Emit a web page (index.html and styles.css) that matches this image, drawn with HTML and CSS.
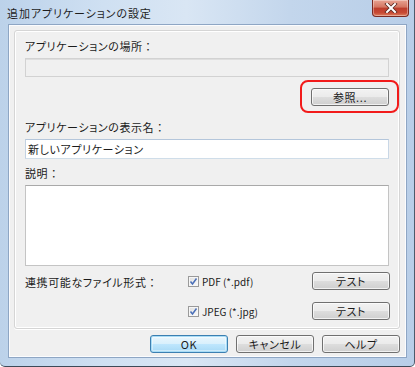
FILE: index.html
```html
<!DOCTYPE html>
<html lang="ja">
<head>
<meta charset="utf-8">
<link rel="stylesheet" href="styles.css">
</head>
<body>
<div class="window">
  <div class="titlebar">
    <span class="title">追加アプリケーションの設定</span>
    <div class="close">
      <svg width="14" height="10" viewBox="0 0 14 10"><path d="M3 1 L11 9 M11 1 L3 9" stroke="#5a2a22" stroke-width="3.6" stroke-linecap="square"/><path d="M3 1 L11 9 M11 1 L3 9" stroke="#fff" stroke-width="2" stroke-linecap="square"/></svg>
    </div>
  </div>
  <div class="client">
    <div class="group">
      <div class="label l1">アプリケーションの場所<span class="colon">：</span></div>
      <div class="field disabled"></div>
      <div class="browse-row">
        <div class="mark"><div class="btn">参照...</div></div>
      </div>
      <div class="label l2">アプリケーションの表示名<span class="colon">：</span></div>
      <div class="field active">新しいアプリケーション</div>
      <div class="label l3">説明<span class="colon">：</span></div>
      <div class="field area"></div>
      <div class="formats">
        <div class="label">連携可能なファイル形式<span class="colon">：</span></div>
        <div class="opts">
          <div class="opt">
            <label class="check"><span class="box"><svg width="9" height="9" viewBox="0 0 9 9"><path d="M1.5 4.5 L3.5 7 L7.5 1.5" fill="none" stroke="#4a6fb8" stroke-width="1.5"/></svg></span>PDF (*.pdf)</label>
            <div class="btn">テスト</div>
          </div>
          <div class="opt">
            <label class="check"><span class="box"><svg width="9" height="9" viewBox="0 0 9 9"><path d="M1.5 4.5 L3.5 7 L7.5 1.5" fill="none" stroke="#4a6fb8" stroke-width="1.5"/></svg></span>JPEG (*.jpg)</label>
            <div class="btn">テスト</div>
          </div>
        </div>
      </div>
    </div>
    <div class="actions">
      <div class="btn default">OK</div>
      <div class="btn">キャンセル</div>
      <div class="btn">ヘルプ</div>
    </div>
  </div>
</div>
</body>
</html>
```

FILE: styles.css
```css
* { box-sizing: border-box; }
html, body { margin: 0; padding: 0; }
body {
  width: 415px;
  height: 367px;
  overflow: hidden;
  font-family: "Noto Sans CJK JP", "Noto Sans", sans-serif;
  font-size: 11px;
  font-feature-settings: "palt";
  letter-spacing: 0.6px;
  color: #1b1b1b;
  background: #fff;
}
.colon { font-feature-settings: normal; letter-spacing: 0; }
.window {
  width: 415px;
  height: 367px;
  display: flex;
  flex-direction: column;
  padding: 0 7px 8px 7px;
  background: linear-gradient(90deg, #bcd2ea 0%, #cfe0f2 25%, #d9e6f4 45%, #c3d6ec 70%, #b8cee8 100%);
  border-right: 1px solid #4c5a6b;
  border-bottom: 1px solid #3d4a58;
  border-radius: 0 0 5px 5px;
}
.titlebar {
  height: 24px;
  display: flex;
  align-items: flex-start;
  justify-content: space-between;
  flex: none;
}
.title {
  margin-top: 5px;
  font-size: 11px;
  color: #1e1e1e;
  letter-spacing: 0.9px;
}
.close {
  width: 37px;
  height: 17px;
  margin-right: -2px;
  display: flex;
  align-items: center;
  justify-content: center;
  background: linear-gradient(#e8a493 0%, #d47561 45%, #bd3d2c 50%, #c74a34 80%, #dd7f5e 100%);
  border: 1px solid #7a2a22;
  border-top: none;
  border-radius: 0 0 4px 4px;
  box-shadow: inset 0 0 0 1px rgba(255,255,255,0.35);
}
.close svg { display: block; }
.client {
  flex: 1;
  margin-left: 1px;
  background: #f0f0f0;
  border: 1px solid #8ea6c4;
  box-shadow: inset 0 0 0 1px #fbfcfe;
  padding: 5px 6px 0 5px;
  display: flex;
  flex-direction: column;
}
.group {
  height: 299px;
  border: 1px solid #d5d5d5;
  border-radius: 3px;
  box-shadow: inset 0 0 0 1px #ffffff, 0 1px 0 #ffffff;
  padding: 7px 10px 0 10px;
  display: flex;
  flex-direction: column;
}
.label {
  line-height: 16px;
  height: 16px;
}
.field {
  margin-top: 4px;
  height: 19px;
  border: 1px solid #d9d9d9;
  background: #f0f0f0;
}
.field.disabled {
  border-color: #d2d2d2;
  box-shadow: inset 0 1px 0 #dedede;
}
.field.active {
  height: 20px;
  background: #fff;
  border: 1px solid #abadb3;
  border-color: #b4c6db #c9d7e6 #cfdde9 #c3d2e2;
  padding-left: 2px;
  line-height: 18px;
}
.field.area {
  height: 81px;
  background: #fff;
  border: 1px solid #c4c4c4;
  border-top-color: #a9a9a9;
}
.browse-row {
  display: flex;
  justify-content: flex-end;
  margin-top: 3px;
  margin-right: -10px;
}
.mark {
  border: 2px solid #f21b1b;
  border-radius: 8px;
  padding: 6px 8px 5px 9px;
}
.btn {
  width: 78px;
  height: 18px;
  display: flex;
  align-items: center;
  justify-content: center;
  border: 1px solid #707070;
  border-radius: 3px;
  background: linear-gradient(#f2f2f2 0%, #ebebeb 48%, #dddddd 52%, #cfcfcf 100%);
  box-shadow: inset 0 0 0 1px rgba(255,255,255,0.7);
  font-size: 11px;
  line-height: 1;
  color: #1b1b1b;
}
.l2 { margin-top: 6px; }
.l3 { margin-top: 6px; }
.formats {
  margin-top: 6px;
  display: flex;
  justify-content: space-between;
}
.formats > .label { margin-top: 2px; }
.opts {
  display: flex;
  flex-direction: column;
  gap: 12px;
  margin-right: -1px;
}
.opt {
  display: flex;
  align-items: center;
}
.check {
  width: 124px;
  display: flex;
  align-items: center;
  gap: 3px;
  font-size: 10px;
  letter-spacing: 0;
}
.box {
  width: 11px;
  height: 11px;
  border: 1px solid #9a9a9a;
  background: linear-gradient(135deg, #dedede, #fbfbfb);
  box-shadow: inset 0 0 0 1px #f6f6f6;
  display: flex;
  align-items: center;
  justify-content: center;
}
.box svg { display: block; }
.actions {
  display: flex;
  justify-content: flex-end;
  gap: 8px;
  margin-top: 6px;
}
.actions .btn { width: 78px; }
.btn.default {
  border-color: #3c7fb1;
  box-shadow: inset 0 0 0 1px #a8dcf6, inset 0 0 0 2px rgba(255,255,255,0.4);
  background: linear-gradient(#eaf6fd 0%, #d9f0fc 48%, #bee6fd 52%, #a7d9f5 100%);
}
```
